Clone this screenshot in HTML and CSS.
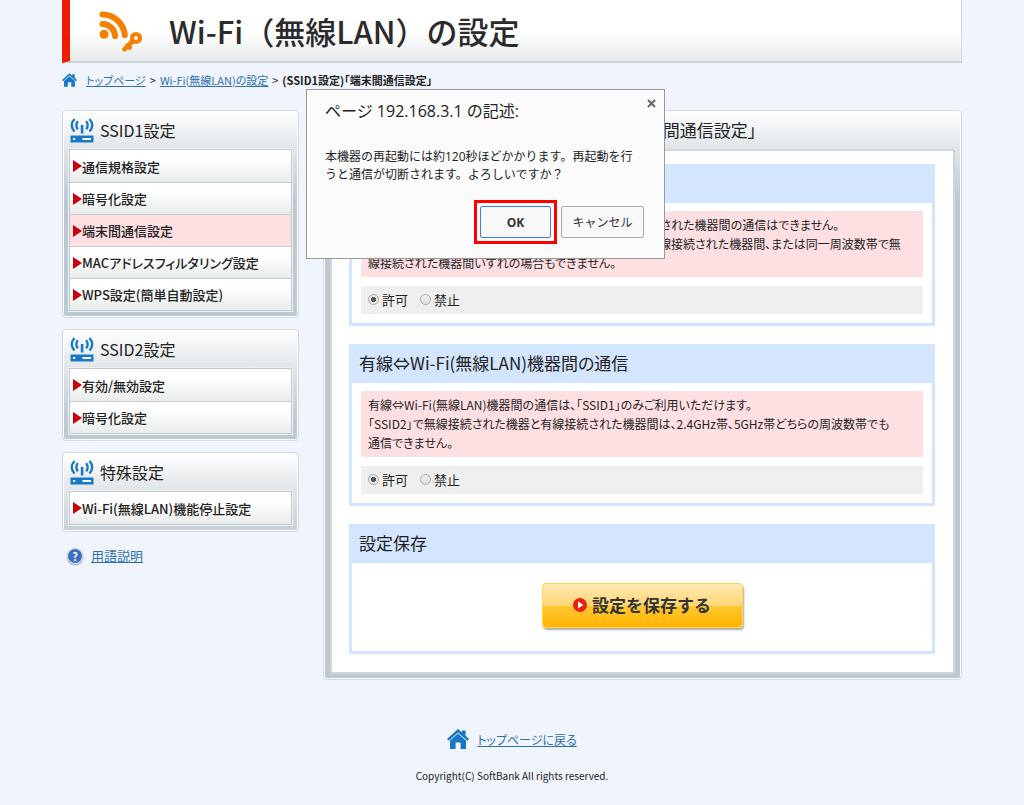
FILE: index.html
```html
<!DOCTYPE html>
<html lang="ja">
<head>
    <meta charset="UTF-8">
    <meta name="viewport" content="width=device-width, initial-scale=1.0">
    <title>Wi-Fi（無線LAN）の設定</title>
    <link rel="stylesheet" href="styles.css">
</head>
<body>
    <!-- Shared icons -->
    <svg class="sprite" aria-hidden="true">
        <symbol id="icon-home" viewBox="0 0 22 20">
            <path d="M11 0 L15 3.6 V1.6 H18.6 V6.8 L22 10 L20.4 11.8 L11 3.4 L1.6 11.8 L0 10 Z"/>
            <path d="M11 4.4 L19 11.600 V20 H13.6 V13.4 H8.6 V20 H3 V11.600 Z"/>
        </symbol>
        <symbol id="icon-router" viewBox="0 0 24 25">
            <path d="M0.500 17.500h23v7h-23z"/>
            <path d="M3 20h2.200v2h-2.200zM12.500 20h8.500v2h-8.500z" fill="#fff"/>
            <path d="M10.800 7h2.600v8.500h-2.600z"/>
            <path d="M7.800 3.200 Q4.900 7.300 7.800 11.400 M16.200 3.200 Q19.100 7.300 16.200 11.400 M4.500 1 Q-1 7.300 4.500 13.600 M19.500 1 Q25 7.300 19.500 13.600" fill="none" stroke="#1878c8" stroke-width="2.300"/>
        </symbol>
    </svg>

    <div class="wrapper">
        <header class="page-header">
            <svg class="header-icon" width="44" height="42" viewBox="0 0 44 42" aria-hidden="true">
                <circle cx="6" cy="24.300" r="4.500" fill="#f77f00"/>
                <path d="M4.500 14 A12.500 12.500 0 0 1 17 26 M4.500 4.500 A22.500 22.500 0 0 1 26.800 25" fill="none" stroke="#f77f00" stroke-width="6" stroke-linecap="round"/>
                <circle cx="38" cy="28" r="4" fill="none" stroke="#f77f00" stroke-width="4.200"/>
                <path d="M34.500 31.500 L26.500 39.200 M29.500 35.500 L31.500 37.500" fill="none" stroke="#f77f00" stroke-width="4.600" stroke-linecap="round"/>
            </svg>
            <h1>Wi-Fi（無線LAN）の設定</h1>
        </header>

        <nav class="breadcrumb">
            <svg class="home-small" aria-hidden="true"><use href="#icon-home"/></svg>
            <a href="#">トップページ</a>
            <span>&gt;</span>
            <a href="#">Wi-Fi(無線LAN)の設定</a>
            <span>&gt;</span>
            <strong>(SSID1設定)「端末間通信設定」</strong>
        </nav>

        <div class="columns">
            <aside class="sidebar">
                <section class="menu-box">
                    <h2><svg class="router" aria-hidden="true"><use href="#icon-router"/></svg>SSID1設定</h2>
                    <ul>
                        <li><a href="#">通信規格設定</a></li>
                        <li><a href="#">暗号化設定</a></li>
                        <li><a href="#" class="current">端末間通信設定</a></li>
                        <li><a href="#">MACアドレスフィルタリング設定</a></li>
                        <li><a href="#">WPS設定(簡単自動設定)</a></li>
                    </ul>
                </section>
                <section class="menu-box">
                    <h2><svg class="router" aria-hidden="true"><use href="#icon-router"/></svg>SSID2設定</h2>
                    <ul>
                        <li><a href="#">有効/無効設定</a></li>
                        <li><a href="#">暗号化設定</a></li>
                    </ul>
                </section>
                <section class="menu-box">
                    <h2><svg class="router" aria-hidden="true"><use href="#icon-router"/></svg>特殊設定</h2>
                    <ul>
                        <li><a href="#">Wi-Fi(無線LAN)機能停止設定</a></li>
                    </ul>
                </section>
                <p class="glossary"><span class="help-icon">?</span><a href="#">用語説明</a></p>
            </aside>

            <main class="main-box">
                <h2>(SSID1設定)「端末間通信設定」</h2>
                <div class="main-inner">
                    <section class="setting">
                        <h3>無線機器間の通信</h3>
                        <div class="setting-body">
                            <p class="note">「禁止」に設定すると、「SSID1」または「SSID2」に無線接続された機器間の通信はできません。<br>2.4GHz帯と5GHz帯のそれぞれの周波数帯で本機器に無線接続された機器間、または同一周波数帯で無<br>線接続された機器間いずれの場合もできません。</p>
                            <div class="choices">
                                <label><input type="radio" name="wireless" checked>許可</label>
                                <label><input type="radio" name="wireless">禁止</label>
                            </div>
                        </div>
                    </section>

                    <section class="setting">
                        <h3>有線⇔Wi-Fi(無線LAN)機器間の通信</h3>
                        <div class="setting-body">
                            <p class="note">有線⇔Wi-Fi(無線LAN)機器間の通信は、「SSID1」のみご利用いただけます。<br>「SSID2」で無線接続された機器と有線接続された機器間は、2.4GHz帯、5GHz帯どちらの周波数帯でも<br>通信できません。</p>
                            <div class="choices">
                                <label><input type="radio" name="wired" checked>許可</label>
                                <label><input type="radio" name="wired">禁止</label>
                            </div>
                        </div>
                    </section>

                    <section class="setting">
                        <h3>設定保存</h3>
                        <div class="save-body">
                            <button type="button" class="save-btn">
                                <svg width="14" height="14" viewBox="0 0 14 14" aria-hidden="true">
                                    <circle cx="7" cy="7" r="7" fill="#e8200c"/>
                                    <path d="M5 3.500 L10.500 7 L5 10.500 Z" fill="#fff"/>
                                </svg>
                                設定を保存する
                            </button>
                        </div>
                    </section>
                </div>
            </main>
        </div>

        <footer>
            <p class="back-top"><svg class="home-large" aria-hidden="true"><use href="#icon-home"/></svg><a href="#">トップページに戻る</a></p>
            <small>Copyright(C) SoftBank All rights reserved.</small>
        </footer>
    </div>

    <div class="dialog" role="dialog" aria-labelledby="dialogTitle">
        <div class="dialog-head">
            <h2 id="dialogTitle">ページ 192.168.3.1 の記述:</h2>
            <button type="button" class="close-btn" aria-label="閉じる">
                <svg width="9" height="9" viewBox="0 0 9 9"><path d="M1 1 L8 8 M8 1 L1 8" stroke="#666" stroke-width="2"/></svg>
            </button>
        </div>
        <p>本機器の再起動には約120秒ほどかかります。再起動を行うと通信が切断されます。よろしいですか？</p>
        <div class="dialog-buttons">
            <span class="highlight"><button type="button" class="ok-btn">OK</button></span>
            <button type="button" class="cancel-btn">キャンセル</button>
        </div>
    </div>
</body>
</html>
```
FILE: styles.css
```css
* {
    margin: 0;
    padding: 0;
    box-sizing: border-box;
}

body {
    position: relative;
    background: #f0f5fd;
    color: #222;
    font-family: "MS PGothic", "Noto Sans CJK JP", sans-serif;
    font-feature-settings: "palt";
    font-size: 13px;
    line-height: 19px;
}

a {
    color: #2f6fae;
}

button {
    font-family: inherit;
    cursor: pointer;
}

.sprite {
    position: absolute;
    width: 0;
    height: 0;
}

.wrapper {
    max-width: 900px;
    margin: 0 auto;
}

/* Header */
.page-header {
    display: flex;
    align-items: center;
    gap: 27px;
    height: 63px;
    padding-left: 28px;
    border-left: 8px solid #ee1c00;
    border-right: 1px solid #d5d9da;
    border-bottom: 2px solid #ccd1d2;
    background: linear-gradient(#fff 50%, #e8ebeb);
}

.page-header h1 {
    color: #2b2b2b;
    font-size: 31px;
    font-weight: 500;
    line-height: 40px;
    font-feature-settings: normal;
}

.breadcrumb {
    display: flex;
    align-items: center;
    gap: 4px;
    height: 34px;
    margin-bottom: 13px;
    font-size: 11px;
}

.home-small {
    width: 15px;
    height: 14px;
    margin-right: 5px;
    fill: #1878c8;
}

.columns {
    display: flex;
    align-items: flex-start;
    gap: 24px;
}

/* Side menu */
.sidebar {
    flex: 0 0 237px;
}

.menu-box,
.main-box {
    border: 1px solid #d3d9dd;
    border-radius: 4px;
    background: linear-gradient(#fff, #dfe4e8 40px, #bcc9d2 90px);
    box-shadow: inset 0 0 0 1px #fff;
}

.menu-box {
    margin-bottom: 11px;
    padding: 0 6px 6px;
}

.menu-box h2,
.main-box h2 {
    display: flex;
    align-items: center;
    height: 38px;
    font-size: 16px;
    font-weight: 400;
    line-height: 20px;
}

.router {
    width: 24px;
    height: 25px;
    margin: 0 6px 0 1px;
    fill: #1878c8;
}

.menu-box ul {
    list-style: none;
    border: 1px solid #c3c8cb;
    outline: 1px solid #eef1f3;
}

.menu-box li + li {
    border-top: 1px solid #c8cccd;
}

.menu-box li a {
    display: flex;
    align-items: center;
    height: 32px;
    padding-left: 3px;
    background: linear-gradient(#fff 30%, #e9ecec);
    color: #222;
    font-weight: 500;
    text-decoration: none;
}

.menu-box li a::before {
    content: "";
    border-left: 9px solid #c7000b;
    border-top: 6px solid transparent;
    border-bottom: 6px solid transparent;
}

.menu-box li + li a {
    height: 31px;
}

.menu-box li a.current {
    background: #ffe0e2;
}

.glossary {
    display: flex;
    align-items: center;
    gap: 8px;
    padding: 3px 5px;
}

.help-icon {
    width: 16px;
    height: 16px;
    border: 1px solid #e2e6ee;
    border-radius: 50%;
    background: #3a70c0;
    box-shadow: 0 1px 2px #999;
    color: #fff;
    font-size: 11px;
    font-weight: 700;
    line-height: 14px;
    text-align: center;
}

/* Main area */
.main-box {
    flex: 1;
    padding: 0 6px 5px;
}

.main-box h2 {
    justify-content: center;
    font-size: 17px;
}

.main-inner {
    display: flex;
    flex-direction: column;
    gap: 18px;
    padding: 13px 18px 18px 17px;
    border: 2px solid #d3d6d8;
    border-radius: 2px;
    background: #fff;
}

.setting {
    border: 3px solid #d3e5ff;
    border-top: 0;
}

.setting h3 {
    height: 39px;
    padding-left: 7px;
    background: #d3e5ff;
    font-size: 17px;
    font-weight: 400;
    line-height: 38px;
}

.setting-body {
    padding: 8px 9px 9px;
}

.note {
    padding: 4px 7px 5px;
    background: #ffe0e2;
    font-size: 12px;
    white-space: nowrap;
    overflow: hidden;
}

.choices {
    display: flex;
    align-items: center;
    gap: 12px;
    height: 28px;
    margin-top: 9px;
    padding: 0 7px 2px;
    background: #efefef;
}

.choices label {
    display: flex;
    align-items: center;
    gap: 3px;
}

.choices input {
    appearance: none;
    width: 11px;
    height: 11px;
    border: 1px solid #aaa;
    border-radius: 50%;
    background: linear-gradient(#f2f2f2, #ddd);
}

.choices input:checked {
    background: radial-gradient(circle, #555 35%, #e8e8e8 45%);
}

.save-body {
    display: flex;
    justify-content: center;
    padding: 20px 0 23px;
}

.save-btn {
    display: flex;
    align-items: center;
    justify-content: center;
    gap: 5px;
    width: 201px;
    height: 45px;
    padding-bottom: 2px;
    border: 1px solid #ffd84d;
    border-radius: 4px;
    background: linear-gradient(#ffe9b4, #ffd675 50%, #ffc832 51%, #ffb400);
    box-shadow: 1px 2px 2px #aaa;
    color: #333;
    font-size: 17px;
    font-weight: 700;
    font-feature-settings: normal;
}

footer {
    padding-top: 47px;
    text-align: center;
}

.back-top {
    display: flex;
    align-items: center;
    justify-content: center;
    gap: 8px;
    height: 24px;
    font-size: 12px;
}

.home-large {
    width: 22px;
    height: 20px;
    fill: #1878c8;
}

footer small {
    display: block;
    padding-top: 15px;
    font-size: 10px;
}

/* Alert dialog over the page */
.dialog {
    position: absolute;
    top: 89px;
    left: calc(50% - 206px);
    width: 359px;
    padding: 9px 8px 14px 18px;
    border: 1px solid #999;
    background: #fbfbfb;
    font-family: "Open Sans", "Noto Sans CJK JP", sans-serif;
    font-feature-settings: normal;
}

.dialog-head {
    display: flex;
    justify-content: space-between;
}

.dialog-head h2 {
    font-size: 16px;
    font-weight: 400;
    line-height: 24px;
}

.close-btn {
    display: flex;
    height: 9px;
    border: 0;
    background: none;
}

.dialog p {
    margin: 25px 18px 0 0;
    font-size: 12px;
    line-height: 18px;
}

.dialog-buttons {
    display: flex;
    align-items: center;
    justify-content: flex-end;
    gap: 4px;
    margin: 16px 12px 0 0;
}

.highlight {
    display: flex;
    padding: 3px;
    border: 3px solid #f00;
}

.ok-btn,
.cancel-btn {
    height: 32px;
    border: 1px solid #aaa;
    border-radius: 2px;
    background: #f8f8f8;
    color: #333;
    font-size: 12px;
}

.ok-btn {
    width: 71px;
    border-color: #3b7ded;
    font-weight: 700;
}

.cancel-btn {
    width: 83px;
}
```
